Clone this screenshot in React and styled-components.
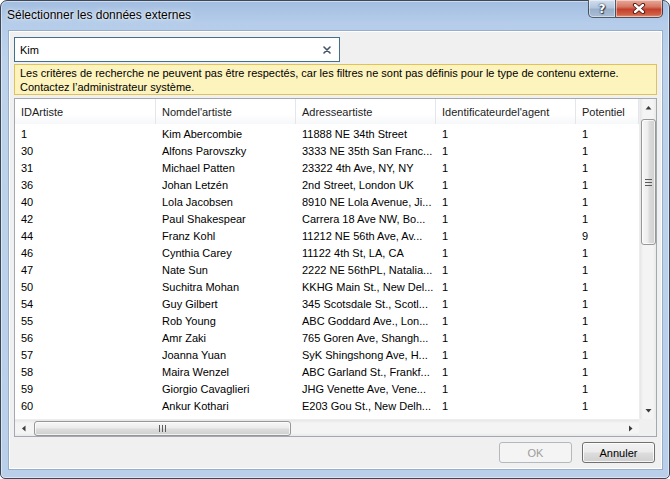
import React from "react";
import styled, { createGlobalStyle } from "styled-components";

const Global = createGlobalStyle`
  html, body { margin: 0; padding: 0; background: #ffffff; }
  body { width: 670px; height: 479px; overflow: hidden; }
  #root { width: 670px; height: 479px; }
  * { box-sizing: border-box; }
`;

const FONT = `"Liberation Sans", Arial, sans-serif`;

const Window = styled.div`
  width: 670px;
  height: 479px;
  border: 1px solid #3e4756;
  border-radius: 7px 7px 5px 5px;
  background: linear-gradient(to bottom, #a2bde0 0px, #b5cdea 22px, #bdd3ec 60px, #bad0ea 100%);
  box-shadow: inset 0 0 0 1px rgba(255, 255, 255, 0.45);
  display: flex;
  flex-direction: column;
  font-family: ${FONT};
  font-size: 11px;
  color: #000;
`;

const TitleBar = styled.div`
  height: 29px;
  flex: none;
  display: flex;
  align-items: flex-start;
  padding-left: 6px;
`;

const Title = styled.div`
  font-size: 12px;
  line-height: 29px;
  color: #000;
  text-shadow: 0 0 6px rgba(255, 255, 255, 0.9), 0 0 2px rgba(255, 255, 255, 0.9);
  white-space: nowrap;
`;

const Caption = styled.div`
  margin: -1px 6px 0 auto;
  display: flex;
  height: 18px;
`;

const CaptionBtn = styled.div`
  width: ${(p) => p.$w}px;
  height: 18px;
  display: flex;
  align-items: center;
  justify-content: center;
  border: 1px solid rgba(38, 48, 66, 0.75);
  border-top: none;
  border-left: ${(p) => (p.$close ? "none" : "1px solid rgba(38, 48, 66, 0.75)")};
  border-radius: ${(p) => (p.$close ? "0 0 5px 0" : "0 0 0 5px")};
  background: ${(p) =>
    p.$close
      ? "linear-gradient(to bottom, #e8aa9a 0%, #d67763 40%, #c3412c 55%, #cf5f45 85%, #e09a7e 100%)"
      : "linear-gradient(to bottom, #d2dfee 0%, #b3c6dd 45%, #9aafc9 55%, #a9bdd6 100%)"};
  box-shadow: inset 0 0 0 1px rgba(255, 255, 255, 0.45);
`;

const HelpGlyph = styled.span`
  font-family: "DejaVu Sans", sans-serif;
  font-weight: bold;
  font-size: 12px;
  line-height: 12px;
  color: #fff;
  text-shadow: 0 0 1px #2b3a52, 0 0 2px #2b3a52, 1px 1px 1px #2b3a52;
`;

const Client = styled.div`
  flex: 1;
  margin: 0 6px 8px 7px;
  border: 1px solid #97aecb;
  box-shadow: inset 0 0 0 1px #ffffff;
  background: #f0f0f0;
  padding: 6px 5px 5px 5px;
  display: flex;
  flex-direction: column;
`;

const SearchBox = styled.div`
  width: 326px;
  height: 25px;
  flex: none;
  border: 1px solid #41708f;
  background: #fff;
  display: flex;
  align-items: center;
  padding: 0 8px 0 5px;
`;

const SearchText = styled.span`
  flex: 1;
  font-size: 11px;
`;

const Notice = styled.div`
  margin-top: 2px;
  height: 31px;
  flex: none;
  border: 1px solid #dfc25c;
  background: #fdf3bd;
  padding: 1px 5px 0 5px;
  line-height: 14px;
  font-size: 11px;
  white-space: nowrap;
`;

const Table = styled.div`
  margin-top: 3px;
  height: 339px;
  flex: none;
  border: 1px solid #a3a9b1;
  background: #fff;
  display: grid;
  grid-template-columns: 1fr 17px;
  grid-template-rows: 1fr 17px;
`;

const ListArea = styled.div`
  overflow: hidden;
  display: flex;
  flex-direction: column;
`;

const Body = styled.div`
  padding-top: 2px;
  display: flex;
  flex-direction: column;
`;

const COLS = "141px 140px 140px 140px 1fr";

const HeaderRow = styled.div`
  height: 25px;
  flex: none;
  display: grid;
  grid-template-columns: ${COLS};
  background: linear-gradient(to bottom, #ffffff 0%, #ffffff 60%, #f6f7f9 100%);
`;

const HeaderCell = styled.div`
  padding-left: 6px;
  display: flex;
  align-items: center;
  border-right: 1px solid #e3e6ea;
  color: #1c1c1c;
  white-space: nowrap;
  overflow: hidden;
`;

const Row = styled.div`
  height: 17px;
  flex: none;
  display: grid;
  grid-template-columns: ${COLS};
  line-height: 17px;
`;

const Cell = styled.div`
  padding-left: 6px;
  white-space: nowrap;
  overflow: hidden;
  color: #000;
`;

const VScroll = styled.div`
  display: flex;
  flex-direction: column;
  background: linear-gradient(to right, #e6e6e6 0%, #f4f4f4 20%, #f4f4f4 80%, #e9e9e9 100%);
  border-left: 1px solid #ededed;
`;

const HScroll = styled.div`
  display: flex;
  background: linear-gradient(to bottom, #e6e6e6 0%, #f4f4f4 20%, #f4f4f4 80%, #e9e9e9 100%);
  border-top: 1px solid #ededed;
`;

const ArrowBtn = styled.div`
  width: 17px;
  height: 17px;
  flex: none;
  display: flex;
  align-items: center;
  justify-content: center;
`;

const VTrack = styled.div`
  flex: 1;
  padding: 3px 1px 0 1px;
`;

const HTrack = styled.div`
  flex: 1;
  padding: 1px 0 0 2px;
`;

const Thumb = styled.div`
  width: ${(p) => p.$w};
  height: ${(p) => p.$h};
  border: 1px solid #979797;
  border-radius: 3px;
  background: ${(p) =>
    p.$vertical
      ? "linear-gradient(to right, #f7f7f7 0%, #ececec 45%, #dcdcdc 55%, #cfcfcf 100%)"
      : "linear-gradient(to bottom, #f7f7f7 0%, #ececec 45%, #dcdcdc 55%, #cfcfcf 100%)"};
  box-shadow: inset 0 0 0 1px rgba(255, 255, 255, 0.7);
  display: flex;
  align-items: center;
  justify-content: center;
`;

const Corner = styled.div`
  background: #f0f0f0;
`;

const ButtonRow = styled.div`
  margin-top: 5px;
  height: 21px;
  flex: none;
  display: flex;
  justify-content: flex-end;
  gap: 10px;
  padding-right: 2px;
`;

const Button = styled.div`
  width: 73px;
  height: 21px;
  display: flex;
  align-items: center;
  justify-content: center;
  border-radius: 3px;
  font-size: 11px;
  border: 1px solid ${(p) => (p.$disabled ? "#b4b9bd" : "#707070")};
  color: ${(p) => (p.$disabled ? "#9c9c9c" : "#000")};
  background: ${(p) =>
    p.$disabled
      ? "#f4f4f4"
      : "linear-gradient(to bottom, #f2f2f2 0%, #ebebeb 48%, #dddddd 52%, #cfcfcf 100%)"};
  box-shadow: ${(p) => (p.$disabled ? "none" : "inset 0 0 0 1px rgba(255,255,255,0.8)")};
`;

const Arrow = ({ dir }) => {
  const pts = {
    up: "0.5,4.5 3.5,1 6.5,4.5",
    down: "0.5,1 3.5,4.5 6.5,1",
    left: "4.5,0.5 1,3.5 4.5,6.5",
    right: "1,0.5 4.5,3.5 1,6.5",
  }[dir];
  const vert = dir === "up" || dir === "down";
  return (
    <svg width={vert ? 7 : 6} height={vert ? 6 : 7} viewBox={vert ? "0 0 7 6" : "0 0 6 7"}>
      <polygon points={pts} fill="#3b3b3b" />
    </svg>
  );
};

const GripV = () => (
  <svg width="7" height="7" viewBox="0 0 7 7">
    <rect x="0" y="0" width="7" height="1" fill="#5b5b5b" />
    <rect x="0" y="3" width="7" height="1" fill="#5b5b5b" />
    <rect x="0" y="6" width="7" height="1" fill="#5b5b5b" />
  </svg>
);

const GripH = () => (
  <svg width="7" height="7" viewBox="0 0 7 7">
    <rect x="0" y="0" width="1" height="7" fill="#5b5b5b" />
    <rect x="3" y="0" width="1" height="7" fill="#5b5b5b" />
    <rect x="6" y="0" width="1" height="7" fill="#5b5b5b" />
  </svg>
);

const ClearIcon = () => (
  <svg width="8" height="8" viewBox="0 0 8 8">
    <path d="M1 1 L7 7 M7 1 L1 7" stroke="#44556a" strokeWidth="1.6" strokeLinecap="round" />
  </svg>
);

const CloseIcon = () => (
  <svg width="14" height="11" viewBox="0 0 14 11">
    <path d="M3 2 L11 9 M11 2 L3 9" stroke="#4a1410" strokeWidth="4.2" strokeLinecap="round" />
    <path d="M3 2 L11 9 M11 2 L3 9" stroke="#ffffff" strokeWidth="2.4" strokeLinecap="round" />
  </svg>
);

const rows = [
  ["1", "Kim Abercombie", "11888 NE 34th Street", "1", "1"],
  ["30", "Alfons Parovszky", "3333 NE 35th San Franc...", "1", "1"],
  ["31", "Michael Patten", "23322 4th Ave, NY, NY", "1", "1"],
  ["36", "Johan Letzén", "2nd Street, London UK", "1", "1"],
  ["40", "Lola Jacobsen", "8910 NE Lola Avenue, Ji...", "1", "1"],
  ["42", "Paul Shakespear", "Carrera 18 Ave NW, Bo...", "1", "1"],
  ["44", "Franz Kohl", "11212 NE 56th Ave, Av...", "1", "9"],
  ["46", "Cynthia Carey", "11122 4th St, LA, CA", "1", "1"],
  ["47", "Nate Sun", "2222 NE 56thPL, Natalia...", "1", "1"],
  ["50", "Suchitra Mohan", "KKHG Main St., New Del...", "1", "1"],
  ["54", "Guy Gilbert", "345 Scotsdale St., Scotl...", "1", "1"],
  ["55", "Rob Young", "ABC Goddard Ave., Lon...", "1", "1"],
  ["56", "Amr Zaki", "765 Goren Ave, Shangh...", "1", "1"],
  ["57", "Joanna Yuan", "SyK Shingshong Ave, H...", "1", "1"],
  ["58", "Maira Wenzel", "ABC Garland St., Frankf...", "1", "1"],
  ["59", "Giorgio Cavaglieri", "JHG Venette Ave, Vene...", "1", "1"],
  ["60", "Ankur Kothari", "E203 Gou St., New Delh...", "1", "1"],
];

const headers = ["IDArtiste", "Nomdel'artiste", "Adresseartiste", "Identificateurdel'agent", "Potentiel"];

export default function App() {
  return (
    <>
      <Global />
      <Window>
        <TitleBar>
          <Title>Sélectionner les données externes</Title>
          <Caption>
            <CaptionBtn $w={28}>
              <HelpGlyph>?</HelpGlyph>
            </CaptionBtn>
            <CaptionBtn $w={47} $close>
              <CloseIcon />
            </CaptionBtn>
          </Caption>
        </TitleBar>
        <Client>
          <SearchBox>
            <SearchText>Kim</SearchText>
            <ClearIcon />
          </SearchBox>
          <Notice>
            Les critères de recherche ne peuvent pas être respectés, car les filtres ne sont pas définis pour le type de contenu externe.
            <br />
            Contactez l’administrateur système.
          </Notice>
          <Table>
            <ListArea>
              <HeaderRow>
                {headers.map((h) => (
                  <HeaderCell key={h}>{h}</HeaderCell>
                ))}
              </HeaderRow>
              <Body>
                {rows.map((r) => (
                  <Row key={r[0]}>
                    {r.map((c, i) => (
                      <Cell key={i}>{c}</Cell>
                    ))}
                  </Row>
                ))}
              </Body>
            </ListArea>
            <VScroll>
              <ArrowBtn>
                <Arrow dir="up" />
              </ArrowBtn>
              <VTrack>
                <Thumb $vertical $w="15px" $h="126px">
                  <GripV />
                </Thumb>
              </VTrack>
              <ArrowBtn>
                <Arrow dir="down" />
              </ArrowBtn>
            </VScroll>
            <HScroll>
              <ArrowBtn>
                <Arrow dir="left" />
              </ArrowBtn>
              <HTrack>
                <Thumb $w="257px" $h="15px">
                  <GripH />
                </Thumb>
              </HTrack>
              <ArrowBtn>
                <Arrow dir="right" />
              </ArrowBtn>
            </HScroll>
            <Corner />
          </Table>
          <ButtonRow>
            <Button $disabled>OK</Button>
            <Button>Annuler</Button>
          </ButtonRow>
        </Client>
      </Window>
    </>
  );
}
